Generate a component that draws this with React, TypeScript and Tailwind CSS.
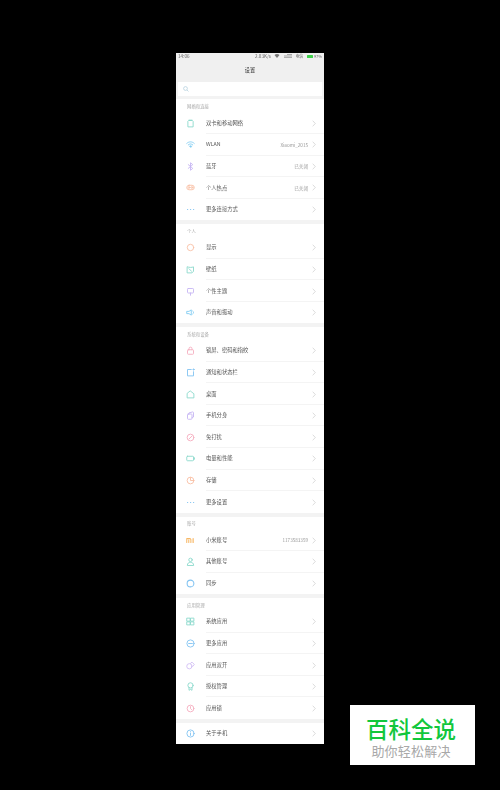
import type { ReactNode } from "react";

const FONT = "[font-family:'Noto_Sans_CJK_SC','Liberation_Sans',sans-serif]";

type Item = { label: string; value?: string; icon: ReactNode };

// little settings icons, 9x9 strokes on a 12 unit box
function Ico({ color, children }: { color: string; children: ReactNode }) {
  return (
    <svg width="9" height="9" viewBox="0 0 12 12" fill="none" stroke={color} strokeWidth="1.2" strokeLinecap="round" strokeLinejoin="round" opacity="0.8">
      {children}
    </svg>
  );
}

const sections: { title?: string; items: Item[] }[] = [
  {
    title: "网络和连接",
    items: [
      { label: "双卡和移动网络", icon: <Ico color="#6fd0c0"><path d="M4 2h4.500l1 1.200V10.500H2.500V3.500z" /><path d="M4 1.500h4" /></Ico> },
      { label: "WLAN", value: "Xiaomi_2015", icon: <Ico color="#62c0ee"><path d="M1 4.500c3-2.800 7-2.800 10 0" /><path d="M3 6.500c2-1.700 4-1.700 6 0" /><path d="M6 9.500 4.800 8.200c.8-.5 1.600-.5 2.400 0z" fill="#62c0ee" /></Ico> },
      { label: "蓝牙", value: "已关闭", icon: <Ico color="#b9a4f0"><path d="M3 3.500l6 5L6 11V1l3 2.500-6 5" /></Ico> },
      { label: "个人热点", value: "已关闭", icon: <Ico color="#f7b08f"><rect x="1" y="3" width="10" height="6" rx="3" /><circle cx="4" cy="6" r="1.200" /><circle cx="8" cy="6" r="1.200" /></Ico> },
      { label: "更多连接方式", icon: <Ico color="#62b4ee"><path d="M2 6h.3M6 6h.3M10 6h.3" strokeWidth="1.400" /></Ico> },
    ],
  },
  {
    title: "个人",
    items: [
      { label: "显示", icon: <Ico color="#f7b08f"><circle cx="6" cy="6" r="4.300" /></Ico> },
      { label: "壁纸", icon: <Ico color="#6fd0c0"><path d="M2 2.500c2.500 1 5.500 1 8 0v6l-2 2H2z" /><path d="M4 5l3.500 3.500" /></Ico> },
      { label: "个性主题", icon: <Ico color="#b9a4f0"><rect x="2" y="2" width="8" height="6" rx="1" /><path d="M6 8v3" /></Ico> },
      { label: "声音和振动", icon: <Ico color="#62c0ee"><path d="M1.500 4.500h2.500L7 2.500v7L4 7.500H1.500z" /><path d="M9 4c1.500 1 1.500 3 0 4" /></Ico> },
    ],
  },
  {
    title: "系统和设备",
    items: [
      { label: "锁屏、密码和指纹", icon: <Ico color="#f39ab0"><rect x="2" y="5" width="8" height="6" rx="1" /><path d="M4 5V3.500a2 2 0 0 1 4 0V5" /></Ico> },
      { label: "通知和状态栏", icon: <Ico color="#62b4ee"><path d="M7 2H2v8.500h8V5" /><circle cx="10" cy="2" r=".8" /></Ico> },
      { label: "桌面", icon: <Ico color="#6fd0c0"><path d="M6 1.500 10.500 5v5.500h-9V5z" /></Ico> },
      { label: "手机分身", icon: <Ico color="#b9a4f0"><rect x="2" y="4" width="6" height="7" rx="1" /><path d="M4 4V2.500l5-1.300c.6 0 1 .4 1 1V8l-2 .8" /></Ico> },
      { label: "免打扰", icon: <Ico color="#f39ab0"><circle cx="6" cy="6" r="4.500" /><path d="M4 8l4-4" /></Ico> },
      { label: "电量和性能", icon: <Ico color="#6fd0c0"><rect x="1" y="3" width="9" height="6" rx="1" /><path d="M11.300 5v2" /></Ico> },
      { label: "存储", icon: <Ico color="#f7b08f"><circle cx="6" cy="6" r="4.500" /><path d="M6 2v4h4" /></Ico> },
      { label: "更多设置", icon: <Ico color="#62b4ee"><path d="M2 6h.3M6 6h.3M10 6h.3" strokeWidth="1.400" /></Ico> },
    ],
  },
  {
    title: "账号",
    items: [
      { label: "小米账号", value: "1173583359", icon: <Ico color="#f5a742"><path d="M1 3.500h4.500l1 1v4M1 3.500v5M3.700 5.500v3" strokeWidth="1.400" /><path d="M9.500 3.500v5" strokeWidth="1.600" /></Ico> },
      { label: "其他账号", icon: <Ico color="#6fd0c0"><circle cx="6" cy="3.800" r="2.300" /><path d="M1.800 10.800c0-2.500 1.800-3.700 4.200-3.700s4.200 1.200 4.200 3.700z" /></Ico> },
      { label: "同步", icon: <Ico color="#62b4ee"><circle cx="6" cy="6" r="4.500" strokeWidth="1.400" /></Ico> },
    ],
  },
  {
    title: "应用管理",
    items: [
      { label: "系统应用", icon: <Ico color="#6fd0c0"><rect x="1.500" y="1.500" width="4" height="4" /><rect x="6.500" y="1.500" width="4" height="4" /><rect x="1.500" y="6.500" width="4" height="4" /><rect x="6.500" y="6.500" width="4" height="4" /></Ico> },
      { label: "更多应用", icon: <Ico color="#62b4ee"><circle cx="6" cy="6" r="4.800" /><path d="M3.500 6h5" /></Ico> },
      { label: "应用双开", icon: <Ico color="#c6aef2"><circle cx="4.500" cy="7" r="3.500" /><path d="M6 3.200 8 1.500l3 3-1.700 2.300" /></Ico> },
      { label: "授权管理", icon: <Ico color="#6fd0c0"><circle cx="6" cy="4.500" r="3.500" /><path d="M4 7.500V11l2-1 2 1V7.500" /></Ico> },
      { label: "应用锁", icon: <Ico color="#f39ab0"><circle cx="6" cy="6" r="4.500" /><path d="M6 3.500V6l1.500 1.500" /></Ico> },
    ],
  },
  {
    items: [
      { label: "关于手机", icon: <Ico color="#62b4ee"><circle cx="6" cy="6" r="4.800" /><path d="M6 5.500v3M6 3.500h.1" /></Ico> },
    ],
  },
];

function Row({ item, last }: { item: Item; last: boolean }) {
  return (
    <div className="flex h-[21.6px] items-center">
      <div className="flex w-[30px] shrink-0 justify-center pr-[1px]">{item.icon}</div>
      <div className={`flex h-full min-w-0 flex-1 items-center border-y border-t-transparent pr-[8px] ${last ? "border-b-transparent" : "border-b-[#f4f4f4]"}`}>
        <span className="flex-1 pt-[1px] text-[5.3px] text-[#555]">{item.label}</span>
        {item.value && <span className="mr-[4px] pt-[1px] text-[4.6px] text-[#999]">{item.value}</span>}
        <svg width="4" height="7" viewBox="0 0 4 7" fill="none" stroke="#c4c4c4" strokeWidth=".6">
          <path d="M.7.7 3.300 3.500.7 6.300" />
        </svg>
      </div>
    </div>
  );
}

export default function App() {
  return (
    <div className={`relative flex h-[790px] w-[500px] justify-center overflow-hidden bg-black pt-[53px] ${FONT}`}>
      <div className="h-[690.500px] w-[148px] bg-[#f3f3f3] blur-[0.6px]">
        {/* status bar + title */}
        <div className="h-[29px] bg-[#f0f0f0]">
          <div className="flex h-[6px] items-center justify-between px-[2px] text-[4.6px] text-[#666]">
            <span>14:06</span>
            <div className="flex items-center gap-[3.500px]">
              <span>2.03K/s</span>
              <svg width="6" height="4" viewBox="0 0 5 4"><path d="M0 1c1.500-1.300 3.500-1.300 5 0L2.500 4z" fill="#777" /></svg>
              <svg width="8" height="4" viewBox="0 0 8 4" stroke="#888" strokeWidth=".7"><path d="M0 3.600h8M0 2h8M3 .5h5" /></svg>
              <span className="text-[4px]">电信</span>
              <div className="flex items-center gap-[1px]">
                <span className="h-[3px] w-[6px] rounded-[0.5px] bg-[#3fd04a]" />
                <span className="text-[4px]">97%</span>
              </div>
            </div>
          </div>
          <div className="flex h-[22px] items-center justify-center text-[5.2px] text-[#333]">设置</div>
        </div>
        <div className="px-[2px]">
          <div className="flex h-[14px] items-center bg-white pl-[5px]">
            <svg width="6" height="6" viewBox="0 0 12 12" fill="none" stroke="#a9c9d8" strokeWidth="1.300">
              <circle cx="5" cy="5" r="3.800" />
              <path d="m8 8 3 3" />
            </svg>
          </div>
        </div>
        <div className="h-[3.400px]" />

        <div className="flex flex-col gap-[3.700px]">
          {sections.map((s, i) => (
            <div key={i} className="bg-white">
              {s.title && (
                <div className="flex h-[13px] items-center pl-[11px] pt-[1px] text-[4.4px] text-[#aaa]">{s.title}</div>
              )}
              {s.items.map((item, j) => (
                <Row key={item.label} item={item} last={j === s.items.length - 1} />
              ))}
            </div>
          ))}
        </div>
      </div>

      {/* watermark */}
      <div className="absolute left-[350px] top-[705px] flex h-[60px] w-[125px] flex-col items-center bg-white pr-[3px] pt-[10px]">
        <div className="text-[22.500px] font-medium leading-[27px] text-[#12c73c]">百科全说</div>
        <div className="text-[13px] leading-[18px] tracking-[0.2px] text-[#a8a8a8]">助你轻松解决</div>
      </div>
    </div>
  );
}
